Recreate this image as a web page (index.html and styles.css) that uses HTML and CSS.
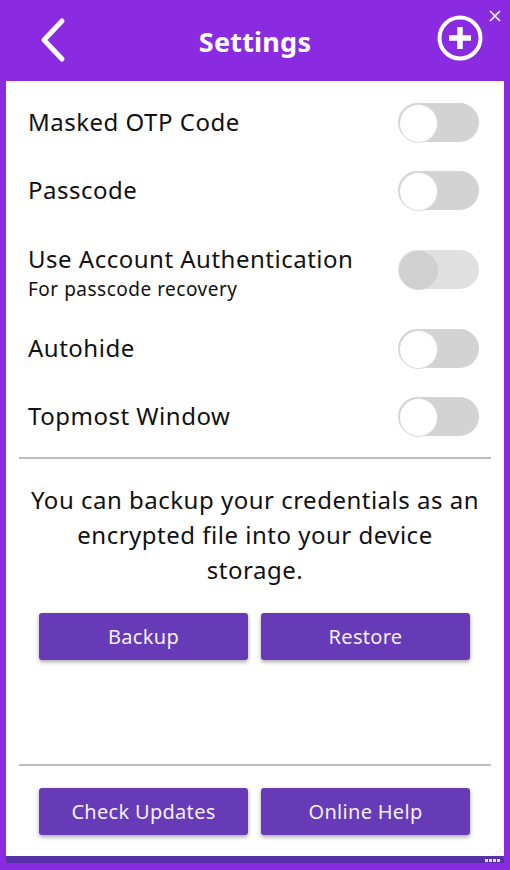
FILE: index.html
```html
<!DOCTYPE html>
<html lang="en">

<head>
    <meta charset="UTF-8">
    <meta name="viewport" content="width=device-width, initial-scale=1.0">
    <title>Settings</title>
    <link rel="stylesheet" href="styles.css">
</head>

<body>
    <div class="window">
        <button class="close" aria-label="Close">
            <svg width="12" height="12" viewBox="0 0 12 12">
                <path d="M1 1 L11 11 M11 1 L1 11" stroke="#fff" stroke-width="1.6" />
            </svg>
        </button>

        <header class="topbar">
            <button class="icon-btn back" aria-label="Back">
                <svg width="30" height="46" viewBox="0 0 30 46">
                    <path d="M24 4 L6 23 L24 42" fill="none" stroke="#fff" stroke-width="5"
                        stroke-linecap="round" stroke-linejoin="round" />
                </svg>
            </button>
            <h1 class="topbar__title">Settings</h1>
            <button class="icon-btn add" aria-label="Add">
                <svg width="48" height="48" viewBox="0 0 48 48">
                    <circle cx="24" cy="24" r="20.5" fill="none" stroke="#fff" stroke-width="4" />
                    <path d="M24 13 V35 M13 24 H35" stroke="#fff" stroke-width="5.5" />
                </svg>
            </button>
        </header>

        <main class="content">
            <ul class="settings">
                <li class="setting">
                    <span class="setting__label">Masked OTP Code</span>
                    <span class="toggle"></span>
                </li>
                <li class="setting">
                    <span class="setting__label">Passcode</span>
                    <span class="toggle"></span>
                </li>
                <li class="setting setting--tall">
                    <span class="setting__label setting__label--stacked">
                        <span class="setting__name">Use Account Authentication</span>
                        <small class="setting__hint">For passcode recovery</small>
                    </span>
                    <span class="toggle toggle--disabled"></span>
                </li>
                <li class="setting">
                    <span class="setting__label">Autohide</span>
                    <span class="toggle"></span>
                </li>
                <li class="setting">
                    <span class="setting__label">Topmost Window</span>
                    <span class="toggle"></span>
                </li>
            </ul>

            <hr class="divider">

            <p class="backup-text">You can backup your credentials as an encrypted file into your device storage.</p>

            <div class="btn-row">
                <button class="btn">Backup</button>
                <button class="btn">Restore</button>
            </div>

            <div class="bottom">
                <hr class="divider">
                <div class="btn-row">
                    <button class="btn">Check Updates</button>
                    <button class="btn">Online Help</button>
                </div>
            </div>
        </main>

        <footer class="statusbar">
            <svg class="grip" width="18" height="16" viewBox="0 0 18 16">
                <g fill="#e6dcf5">
                    <rect x="15" y="1" width="2" height="2" opacity=".5" />
                    <rect x="12" y="4" width="2" height="2" opacity=".5" />
                    <rect x="15" y="4" width="2" height="2" opacity=".5" />
                    <rect x="9" y="7" width="2" height="2" opacity=".5" />
                    <rect x="12" y="7" width="2" height="2" opacity=".5" />
                    <rect x="15" y="7" width="2" height="2" opacity=".5" />
                    <rect x="1" y="12" width="3" height="3" />
                    <rect x="5" y="12" width="3" height="3" />
                    <rect x="9" y="12" width="3" height="3" />
                    <rect x="13" y="12" width="3" height="3" />
                </g>
            </svg>
        </footer>
    </div>
</body>

</html>
```

FILE: styles.css
```css
:root {
    --ff-primary: 'Noto Sans', 'Open Sans', sans-serif;
    --clr-frame: #8a2be2;
    --clr-button: #673ab7;
    --clr-strip: #5530a6;
    --clr-text: #111;
    --clr-line: #bdbdbd;
}

* {
    margin: 0;
    padding: 0;
    box-sizing: border-box;
}

body {
    background: var(--clr-frame);
    font-family: var(--ff-primary);
    color: var(--clr-text);
}

button {
    font-family: inherit;
    border: 0;
    background: transparent;
    cursor: pointer;
}

.window {
    position: relative;
    display: flex;
    flex-direction: column;
    height: 870px;
    padding: 0 6px 7px;
}

.close {
    position: absolute;
    top: 10px;
    right: 9px;
    display: flex;
}

/* header */
.topbar {
    height: 81px;
    display: flex;
    align-items: center;
    padding: 0 20px 2px 32px;
}

.icon-btn {
    display: flex;
}

.add {
    margin-top: -3px;
}

.topbar__title {
    flex: 1;
    text-align: center;
    color: #fff;
    font-size: 27px;
    font-weight: 700;
    letter-spacing: .2px;
    margin-left: 6px;
    margin-top: 3px;
}

/* content */
.content {
    flex: 1;
    display: flex;
    flex-direction: column;
    background: #fff;
    padding: 7px 0 0;
    letter-spacing: .5px;
}

.settings {
    list-style: none;
}

.setting {
    height: 68px;
    display: flex;
    align-items: center;
    justify-content: space-between;
    padding: 0 25px 0 22px;
}

.setting--tall {
    height: 90px;
}

.setting__label {
    display: flex;
    flex-direction: column;
    font-size: 24px;
    line-height: 28px;
}

.setting__label--stacked {
    padding-top: 8px;
}

.setting__hint {
    font-size: 19px;
    line-height: 24px;
    margin-top: 4px;
}

.toggle {
    position: relative;
    width: 81px;
    height: 39px;
    border-radius: 20px;
    background: #d3d3d3;
}

.toggle::before {
    content: '';
    position: absolute;
    left: 1px;
    top: 1px;
    width: 37px;
    height: 37px;
    border-radius: 50%;
    background: #fff;
    border: 1px solid #d9d9d9;
}

.toggle--disabled {
    background: #e0e0e0;
}

.toggle--disabled::before {
    background: #d0d0d0;
    border-color: #d0d0d0;
}

.divider {
    border: 0;
    height: 2px;
    background: var(--clr-line);
    margin: 7px 13px 0;
}

.backup-text {
    font-size: 24px;
    line-height: 35px;
    text-align: center;
    padding: 23px 22px 0;
}

.btn-row {
    display: flex;
    gap: 13px;
    padding: 26px 34px 0 33px;
}

.btn {
    flex: 1;
    height: 47px;
    border-radius: 3px;
    background: var(--clr-button);
    color: #f4f0fa;
    font-size: 20px;
    letter-spacing: .3px;
    box-shadow: 0 2px 4px rgba(0, 0, 0, .35);
}

.bottom {
    margin-top: auto;
    padding-bottom: 21px;
}

.bottom .btn-row {
    padding-top: 22px;
}

/* bottom strip */
.statusbar {
    height: 7px;
    background: var(--clr-strip);
    position: relative;
}

.grip {
    position: absolute;
    right: 2px;
    bottom: 0;
}
```
